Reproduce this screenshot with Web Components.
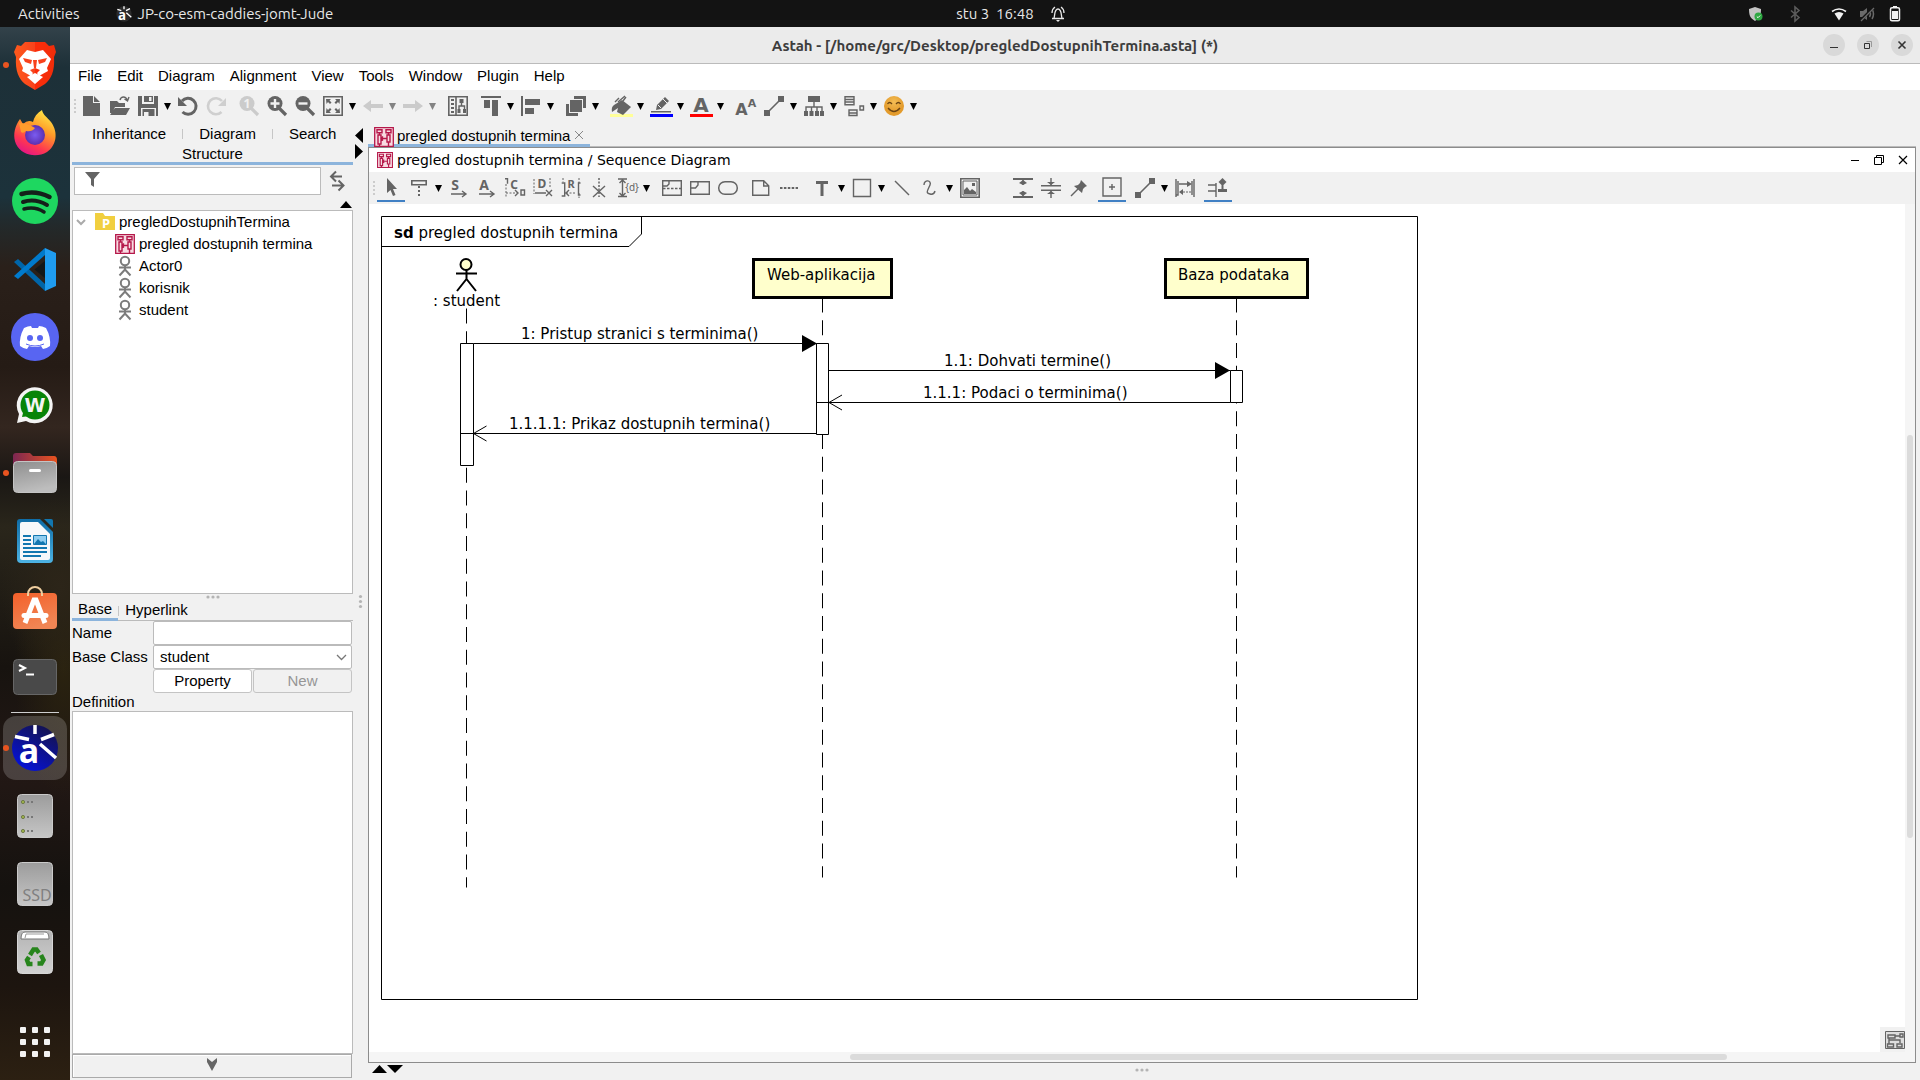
<!DOCTYPE html>
<html lang="hr">
<head>
<meta charset="utf-8">
<title>Astah - pregledDostupnihTermina.asta</title>
<style>
  html, body { height: 100%; margin: 0; }
  body {
    display: flex; flex-direction: column; overflow: hidden;
    font: 15px/20px "Liberation Sans", sans-serif; color: #000; background: #f1f1f1;
  }
  .desk { flex: 1; display: flex; min-height: 0; }
</style>
</head>
<body>
<top-bar></top-bar>
<div class="desk">
  <app-dock></app-dock>
  <app-window heading="Astah - [/home/grc/Desktop/pregledDostupnihTermina.asta] (*)">
    <menu-bar slot="menu" items="File,Edit,Diagram,Alignment,View,Tools,Window,Plugin,Help"></menu-bar>
    <tool-bar slot="tools" size="main"
      items="new open save+ undo redo - zoom1 zoomin zoomout fit+ back~ forward~ - struct - aligntop+ alignleft+ - stack+ - bucket+ pen+ fontcolor+ - fontsize link+ tree+ boxes+ smile+"></tool-bar>
    <side-panel slot="side"></side-panel>
    <split-handle slot="split"></split-handle>
    <editor-pane slot="editor" name="pregled dostupnih termina" kind="Sequence Diagram">
      <tool-bar slot="tools" size="sub"
        items="select! lifeline+ smsg amsg create destroy reply stop duration+ - combined frame state - note dots - text+ rect+ line curve+ image = vmax vmin pin - plus! - link+ fragment - snap!"></tool-bar>
      <sequence-diagram></sequence-diagram>
    </editor-pane>
  </app-window>
</div>

<script>
const G = '#646464';
const seq = `<path fill="#f8dbe2" stroke="#b5184a" stroke-width="1.300" d="M.7.7h18.600v18.600H.700z"/><g fill="none" stroke="#b5184a" stroke-width="1.400"><path d="M3 2.800h5v3H3zM12 2.800h5v3h-5zM4 8h3v9H4zM13 8h3v7h-3zM5.500 6v2M14.500 6v2M5.500 17v2.500M14.500 15v4.500M7 11.500h6M9 9.500l-2 2 2 2"/></g>`;
const person = `<g fill="none" stroke="#7c7c7c" stroke-width="2"><circle cx="10" cy="5" r="4.200"/><path d="M4 11.500h12M10 9v5M4.500 19.500L10 13.500l5.500 6"/></g>`;
const chain = `<path fill="${G}" d="M0 14h6v6H0zM14 0h6v6h-6z"/><path stroke="${G}" stroke-width="1.600" d="M4 16L16 4"/>`;
const lens = (c, inner) => `<circle cx="8" cy="7.500" r="7.500" fill="${c}"/><path d="M12 12l7 7" stroke="${c}" stroke-width="3.200"/>${inner}`;
const letter = (t, x, y, s, c = G, f = 'Noto Sans') => `<text x="${x}" y="${y}" font-family="${f}" font-weight="bold" font-size="${s}" fill="${c}" text-anchor="middle">${t}</text>`;
const o = d => `<path fill="none" stroke="${G}" stroke-width="1.400" d="${d}"/>`;
const f = d => `<path fill="${G}" d="${d}"/>`;

const ICONS = {
  new: f('M1 0h10v7h7v13H1zM12 0l6 6h-6z'),
  open: f('M0 5h7l2 2h6v4H5l-3 6H0zM5 12h15l-4 7H0z') + o('M10 4c1-4 6-4 7 0M14.500 3l3 2 1.500-4'),
  save: f('M0 0h4v8h12V0h4v20h-2v-8H3v8H0zM6 0h9v6H6zM4.500 13h12v7h-6v-4H6v4H4.500z') + `<path fill="#f1f1f1" d="M11 1h2.500v4H11z"/>`,
  undo: `<path d="M4 5A8 8 0 1 1 4.500 16" fill="none" stroke="${G}" stroke-width="3"/>` + f('M0 1v9h9z'),
  redo: `<path d="M16 5A8 8 0 1 0 15.500 16" fill="none" stroke="#cfcfcf" stroke-width="2.600"/><path fill="#cfcfcf" d="M20 2v8h-8z"/>`,
  zoom1: lens('#cbcbcb', letter('1', 8, 12, 12, '#f1f1f1')),
  zoomin: lens(G, '<path stroke="#f1f1f1" stroke-width="2.400" d="M8 3v9M3.500 7.500h9"/>'),
  zoomout: lens(G, '<path stroke="#f1f1f1" stroke-width="2.400" d="M3.500 7.500h9"/>'),
  fit: `<path fill="none" stroke="${G}" stroke-width="1.600" d="M.8.8h18.400v18.400H.800z"/>` + f('M3 3h5L6.500 4.500 8.500 6.500 7 8 5 6 3.500 8zM17 3h-5l1.500 1.500-2 2L13 8l2-2 1.500 2zM3 17h5l-1.500-1.500 2-2L7 12l-2 2-1.500-2zM17 17h-5l1.500-1.500-2-2L13 12l2 2 1.500-2z'),
  back: '<path fill="#cbcbcb" d="M0 10l8-6v4h12v4H8v4z"/>',
  forward: '<path fill="#cbcbcb" d="M20 10l-8-6v4H0v4h12v4z"/>',
  struct: `<path fill="none" stroke="${G}" stroke-width="1.600" d="M.8.8h18.400v18.400H.8zM8 1v18"/>` + f('M3 3h3v2H3zM3 7h3v2H3zM3 11h3v2H3zM3 15h3v2H3zM11.500 3h4v4h-4zM9.500 13h3v4h-3zM15 13h3v4h-3z') + o('M13.500 7v3M11 13v-3h5.500v3'),
  aligntop: f('M0 0h20v2H0zM3 4h6v8H3zM11 4h6v16h-6z'),
  alignleft: f('M0 0h2v20H0zM4 3h15v6H4zM4 12h9v6H4z'),
  stack: f('M8 0h12v12h-3V3H8zM4 4h12v12H4zM0 8h3v9h9v3H0z'),
  bucket: f('M3 9l8-5 9 7-8 8-6-3 1-4-6 4q-1-5 2-7z') + o('M4 6l4-4M7 6l7-6M12 5l3-4'),
  pen: f('M5 14l1-5 8-8 4 4-8 8zM0 15h20v1.400H0z') + '<path stroke="#f1f1f1" d="M12 3l4 4M7 9l3 3"/>',
  fontcolor: letter('A', 10, 16, 20, G, 'DejaVu Sans'),
  fontsize: letter('A', 5.500, 19, 16, G, 'DejaVu Sans') + letter('A', 16, 11, 11, G, 'DejaVu Sans'),
  link: chain,
  tree: f('M4 0h12v6H4zM0 15h4v5H0zM5.500 15h4v5h-4zM11 15h4v5h-4zM16 15h4v5h-4z') + o('M10 6v5M2 15v-4h16v4M7.500 15v-4M13 15v-4'),
  boxes: o('M1 .7h9v8H1zM1 3.500h9M1 6h9M5 14h8v5.500H5zM5 17h8M16 10h3.500v4H16z'),
  smile: `<radialGradient id="g" cy=".3"><stop stop-color="#f4bd55"/><stop offset="1" stop-color="#e39b2c"/></radialGradient><circle cx="10" cy="10" r="10" fill="url(#g)"/><path fill="none" stroke="#6b4413" stroke-width="1.300" d="M3.500 8q2-3 4.500 0M12 8q2.500-3 4.500 0M4 12q6 7 12 0"/>`,
  select: f('M6 1v15l3.500-3 2.500 6 2.500-1-2.500-6h4z'),
  lifeline: `<path fill="none" stroke="${G}" stroke-width="1.600" d="M2.800 2.800h14.400v4H2.800z"/><path stroke="${G}" stroke-width="2" stroke-dasharray="2 2" d="M10 8v11"/>`,
  smsg: letter('S', 6, 12, 14) + o('M2 16h15M13 13l4 3-4 3'),
  amsg: letter('A', 7, 12, 14) + o('M2 16h15M13 13l4 3-4 3'),
  create: letter('C', 9, 11, 12) + o('M0 .7h2.500v5') + `<path fill="none" stroke="${G}" stroke-dasharray="2 1.500" d="M1 6v13M1 15h12"/>` + o('M16 12h3.500v5H16zM10 12l3 3-3 3'),
  destroy: letter('D', 9, 10, 12) + `<path fill="none" stroke="${G}" stroke-dasharray="2 1.500" d="M1 1v15M17 0v10"/>` + o('M2 15h11M13 12l6 6M19 12l-6 6'),
  reply: letter('R', 10, 10, 11) + `<path fill="none" stroke="${G}" stroke-dasharray="2 1.500" d="M2 0v4M18 0v5M5 15h10M18 15v5"/>` + o('M.7 5h3v13h-3M19.500 5h-2v12h2M8 12l-3 3 3 3'),
  stop: o('M4 8l12 11M16 8L4 19') + `<path stroke="${G}" stroke-width="1.500" stroke-dasharray="2 1.500" d="M10 0v19"/>`,
  duration: o('M1 1h9M1 18.500h9M5.500 2v16M2.500 5l3-3 3 3M2.500 15l3 3 3-3') + `<text x="15" y="13" font-family="Noto Sans" font-size="10" fill="${G}" text-anchor="middle">{d}</text>`,
  combined: o('M.7 2.700h18.600v14.600H.700zM7 3v3L5 8H1') + `<path stroke="${G}" stroke-width="1.500" stroke-dasharray="2.500 1.500" d="M1 10.500h18"/>`,
  frame: o('M.7 3.700h18.600v12.600H.700zM8 4v3l-2.500 3H1'),
  state: `<rect x=".7" y="3.700" width="18.600" height="12.600" rx="6.300" fill="none" stroke="${G}" stroke-width="1.500"/>`,
  note: o('M1.700 2.700h11l5 5v9.600h-16zM12.700 3v5h5'),
  dots: `<path stroke="${G}" stroke-width="2" stroke-dasharray="2.500 1.400" d="M1 10h18"/>`,
  text: f('M4 3h12v3h-4.500v12h-3V6H4z'),
  rect: o('M1.500 1.500h17v17h-17z'),
  line: o('M3 3l14 14'),
  curve: o('M4 7c0-6 8-5 6 0s-5 8 0 9q4 1 5-3'),
  image: `<path fill="none" stroke="${G}" stroke-width="1.600" d="M.8.8h18.400v18.400H.8z"/><path fill="none" stroke="${G}" d="M3 3h14v14H3z"/>` + f('M4 16v-4l3-3 3 4 2-2 4 3v2zM12 5h3v3h-3z'),
  vmax: f('M0 0h20v2H0zM0 18h20v2H0z') + o('M10 2v5M10 13v5') + f('M6 5l4-3 4 3-4 2zM6 15l4-2 4 2-4 3z'),
  vmin: f('M0 7h20v1.600H0zM0 11.400h20V13H0z') + o('M10 0v7M10 13v7') + f('M6 4h8l-4 3zM6 16h8l-4-3z'),
  pin: f('M12 2l6 6-2 1-2 2-1 4-8-7 4-1 2-2z') + o('M9 11l-7 7'),
  plus: o('M1 1h18v18H1zM10 7v6M7 10h6'),
  fragment: o('M1 1v18M3 3v14H.700M19 1v18M17 3v14M4 6h11') + f('M12 3l5 3-5 3zM4 14l4-3v6z') + `<path stroke="${G}" stroke-dasharray="2 1" d="M8 14h8"/>`,
  snap: o('M0 8h8M0 14h8M8 6v14') + f('M10 12h9v3h-9zM14.500 1l4 4-4 4-4-4zM13.500 8h2v4h-2z'),
  map: `<path fill="#dedede" stroke="${G}" d="M.5 1.500h19v17H.5z"/>` + o('M3 5h7v3H3zM10 6h5M4 8v6M4 10h11v3M2.500 14h6v3h-6zM12 14h5v3h-5zM15 4h3v3h-3z'),
  seq, person,
  folder: '<path fill="#f1cf3f" d="M0 1h8l2 3h10v14H0z"/>' + letter('P', 11, 16, 13, '#fff'),
  filter: f('M3 2h15l-6 7v8l-3-2V9z'),
  swap: `<path fill="none" stroke="${G}" stroke-width="2" d="M15 5.500H4M9 .500l-5 5 5 5M5 14.500h11M11.500 9.500l5 5-5 5"/>`,
  shield: '<path fill="#c4c4c4" d="M2 3l6-2 6 2c0 6-1 9-6 12C3 12 2 9 2 3z"/><circle cx="11.500" cy="10.500" r="4" fill="#2fa843"/><path fill="none" stroke="#fff" d="M9.800 10.500l1.200 1.200 2.200-2.200"/>',
  bluetooth: '<path fill="none" stroke="#5c5c5c" stroke-width="1.600" d="M4 4.500l8 7-4 3.500V1l4 3.500-8 7"/>',
  wifi: '<path fill="#f2f2f2" d="M3.500 7.500q4.500-3 9 0L8 14.500z"/><path fill="none" stroke="#f2f2f2" stroke-width="1.600" d="M1 5.500q7-5 14 0"/>',
  mute: '<path fill="#6a6a6a" d="M1 5h3l4-3v12l-4-3H1z"/><path fill="none" stroke="#6a6a6a" stroke-width="1.500" d="M10.500 5q2 3 0 6M13 3q3 5 0 10"/><path stroke="#131313" stroke-width="2.500" d="M2 14L14 2"/><path stroke="#6a6a6a" stroke-width="1.300" d="M2 15L15 2"/>',
  battery: '<path fill="#f2f2f2" d="M5 5h6v8H5zM6 0h4v2H6z"/><rect x="3.500" y="1.700" width="9" height="13" rx="1.500" fill="none" stroke="#f2f2f2" stroke-width="1.500"/>',
  bell: '<path fill="none" stroke="#e8e8e8" stroke-width="1.300" d="M2 12.500h12M4 12c1-2 0-9 4-9s3 7 4 9M2 7q0-4 3-6M14 7q0-4-3-6"/><path fill="#e8e8e8" d="M6 14h4l-2 2z"/>',
};

const DOCK = {
  brave: `<linearGradient id="b"><stop stop-color="#ff5a1c"/><stop offset=".5" stop-color="#f8421c"/><stop offset=".51" stop-color="#fb2d0a"/><stop offset="1" stop-color="#f02d0a"/></linearGradient><path fill="url(#b)" d="M14 1h20l4 4 5-1 2 7-2 5c1 14-3 22-9 27l-10 6-10-6C8 38 4 30 5 16l-2-5 3-7 4 1z"/><path fill="#fff" d="M16 9l8 2 8-2 8 9-4 9 1 3-9 5-2-3 3-3-5-2-5 2 3 3-2 3-9-5 1-3-4-9zM24 32l8 4-8 7-8-7z"/><path fill="#f8421c" d="M12 17l9 2-1 4-6-2zM36 17l-9 2 1 4 6-2zM22 19h4l-1 8h-2z"/>`,
  firefox: `<linearGradient id="f" x1=".8" y1="0" x2=".3" y2="1"><stop stop-color="#fff04a"/><stop offset=".4" stop-color="#ff9a28"/><stop offset=".75" stop-color="#ff3750"/><stop offset="1" stop-color="#e31587"/></linearGradient><radialGradient id="f2"><stop stop-color="#7a5cf0"/><stop offset="1" stop-color="#5b2fb0"/></radialGradient><path fill="url(#f)" d="M31 1c1 5 5 7 9 12 8 11 5 24-4 30-10 6-25 4-31-8C2 28 3 20 7 13l2-3 3 5q5-5 10-2c1-5 4-9 9-12z"/><circle cx="24" cy="26" r="10" fill="url(#f2)"/><path fill="#ff9c2c" d="M8 14q8 0 16 5-3 4-9 3-3 3-5 1z"/>`,
  spotify: `<circle cx="24" cy="24" r="23" fill="#1ed760"/><g fill="none" stroke="#14201a" stroke-linecap="round"><path stroke-width="4.500" d="M10.500 17q14-4 28 3"/><path stroke-width="4" d="M12 25q12-4 24 3"/><path stroke-width="3.500" d="M13 32q11-3 20 3"/></g>`,
  code: `<path fill="#0065a9" d="M3 17l4-3 27 25v7z"/><path fill="#007acc" d="M3 31l4 3 27-24V3z"/><path fill="#1f9cf0" d="M34 3l11 5v33l-11 5z"/><path fill="#131719" d="M34 16v17L23.500 24.500z"/>`,
  discord: `<circle cx="24" cy="24" r="24" fill="#5865f2"/><path fill="#fff" d="M13 15q4-2 7-2l1 2h6l1-2q3 0 7 2 5 9 4 18-4 3-7 3l-2-3q-6 2-12 0l-2 3q-3 0-7-3-1-9 4-18z"/><circle cx="19" cy="25" r="3" fill="#5865f2"/><circle cx="29" cy="25" r="3" fill="#5865f2"/><path fill="none" stroke="#5865f2" d="M15 31q9 4 18 0"/>`,
  whats: `<path fill="#f4f4f4" d="M6 42l2-9a18 18 0 1 1 7 7z"/><circle cx="24" cy="24" r="14.500" fill="#078407"/><path fill="#078407" d="M11 36l2-8 6 7z"/>` + letter('W', 24, 31, 19, '#f4f4f4', 'DejaVu Sans'),
  files: `<linearGradient id="c"><stop stop-color="#7c2752"/><stop offset="1" stop-color="#e9531f"/></linearGradient><linearGradient id="d" x2=".3" y2="1"><stop stop-color="#8e8e8e"/><stop offset="1" stop-color="#bdbdbd"/></linearGradient><path fill="url(#c)" d="M2 7q0-3 3-3h14l3 3h21q3 0 3 4v10H2z"/><rect x="2.500" y="12.500" width="43" height="31" rx="4" fill="url(#d)" stroke="#c4c4c4"/><rect x="18" y="20" width="12" height="3" rx="1.500" fill="#fff"/>`,
  writer: `<linearGradient id="w" y2="1" x2="0"><stop stop-color="#0e6ca6"/><stop offset="1" stop-color="#4db3e4"/></linearGradient><path fill="url(#w)" d="M9 2h20l13 13v27q0 4-4 4H10q-4 0-4-4V5q0-3 3-3z"/><path fill="#f6f8fa" d="M11 5h16l12 12v24q0 2-2 2H11q-2 0-2-2V7q0-2 2-2z"/><path fill="#1277b0" d="M33 2h7q2 0 2 2v7z"/><path stroke="#1277b0" stroke-width="2" d="M12 19h8M12 23h8M12 27h8M12 31h24M12 35h24M12 39h18"/><path fill="#8fcdf0" stroke="#1277b0" d="M22.500 18.500h13v9h-13z"/><path fill="#1277b0" d="M23 27l4-5 3 3 2-1 3 3z"/>`,
  store: `<linearGradient id="s" x2=".4" y2="1"><stop stop-color="#f4602a"/><stop offset="1" stop-color="#f08554"/></linearGradient><rect x="2" y="8" width="44" height="36" rx="4" fill="url(#s)"/><path fill="none" stroke="#f0cfa0" stroke-width="2" d="M17 11V9a7 7 0 0 1 14 0v2"/><path fill="none" stroke="#fff" stroke-width="5" d="M14 38l9-23h2l9 23"/><path stroke="#fff" stroke-width="5" stroke-linecap="round" d="M13 30.500h22"/>`,
  terminal: `<rect x="2.500" y="6.500" width="43" height="35" rx="4" fill="#494949" stroke="#666"/><path fill="none" stroke="#fff" stroke-width="2" d="M8 12l6 3-6 3M15 21.500h8"/>`,
  astah: `<linearGradient id="a" x1=".2" y1="1" x2=".8" y2="0"><stop stop-color="#0512dd"/><stop offset="1" stop-color="#15134a"/></linearGradient><circle cx="24" cy="24" r="23" fill="url(#a)"/><g fill="none" stroke="#fff" stroke-width="3.500"><path d="M24 1v9M4 12.500l14 3M43 10.500l-13 5M29 20l16 14"/></g>` + letter('a', 18, 39, 34, '#fff'),
  disks: `<linearGradient id="k" y2="1" x2="0"><stop stop-color="#9c9c9c"/><stop offset="1" stop-color="#c6c6c6"/></linearGradient><rect x="6.500" y="2.500" width="35" height="43" rx="4" fill="url(#k)" stroke="#cacaca"/><g fill="#9fb548" stroke="#6f7a4a"><circle cx="12" cy="10" r="1.600"/><circle cx="12" cy="25" r="1.600"/><circle cx="12" cy="39" r="1.600"/></g><path stroke="#777" stroke-width="2" stroke-dasharray="2 2" d="M16 10h6M16 25h6M16 39h6"/>`,
  ssd: `<linearGradient id="k" y2="1" x2="0"><stop stop-color="#9c9c9c"/><stop offset="1" stop-color="#c6c6c6"/></linearGradient><rect x="6.500" y="2.500" width="35" height="43" rx="4" fill="url(#k)" stroke="#cacaca"/><text x="26" y="41" font-family="Noto Sans" font-size="16" fill="#808080" text-anchor="middle">SSD</text>`,
  trash: `<linearGradient id="t" y2="1" x2="0"><stop stop-color="#b4b4b4"/><stop offset="1" stop-color="#d2d2d2"/></linearGradient><rect x="6.500" y="2.500" width="35" height="43" rx="4" fill="url(#t)" stroke="#d6d6d6"/><path fill="#fff" stroke="#777" d="M10 11q0-7 4-7h20q4 0 4 7z"/><path fill="none" stroke="#999" d="M14 10l1-4h18"/><g fill="none" stroke="#27851c" stroke-width="4.500"><path d="M19 27l3.500-5.500h3L28 25"/><path d="M30 27l2.500 5-2 3.500h-4"/><path d="M21.500 36h-4l-1.500-4 2-3"/></g>`,
  grid: `<g fill="#f2f2f2">${[9, 21, 33].map(y => [9, 21, 33].map(x => `<rect x="${x}" y="${y}" width="6" height="6" rx="1"/>`).join('')).join('')}</g>`,
};

/* Base class: renders the markup that view() returns into an open shadow root. */
class Base extends HTMLElement {
  connectedCallback() {
    if (this.shadowRoot) return;
    const t = document.createElement('template');
    t.innerHTML = `<style>:host,*{box-sizing:border-box} svg{overflow:visible} button{font:inherit;color:inherit;margin:0;padding:0;border:0;background:none}</style>` + this.view();
    this.attachShadow({ mode: 'open' }).append(t.content.cloneNode(true));
  }
}
const define = (name, view) => customElements.define(name, class extends Base { view() { return view(this); } });

define('ui-icon', e => {
  const s = e.getAttribute('size') || 20;
  const n = e.getAttribute('name');
  const box = { shield: 16, bluetooth: 16, wifi: 16, mute: 16, battery: 16, bell: 16 }[n] || 20;
  return `<style>:host{display:block;flex:none;width:${s}px;height:${s}px}svg{display:block}</style>
  <svg width="${s}" height="${s}" viewBox="0 0 ${box} ${box}" aria-hidden="true">${ICONS[n]}</svg>`;
});

define('top-bar', () => `<style>
  :host{display:grid;grid-template-columns:1fr auto 1fr;align-items:center;flex:none;height:27px;background:#131313;color:#e8e8e8;font:15px/20px Ubuntu,"Noto Sans",sans-serif}
  div{display:flex;align-items:center}
  .l{padding-left:18px;gap:36px} .app{gap:6px}
  .c{padding-left:102px;gap:16px} .c span{white-space:pre}
  .r{justify-content:flex-end;gap:12px;padding-right:17px}
  .bt{margin:0 16px 0 12px}
  </style>
  <div class="l"><button>Activities</button><div class="app">
    <svg width="16" height="16" viewBox="0 0 48 48" aria-hidden="true"><circle cx="24" cy="24" r="23" fill="#2b2b2b"/><g stroke="#fff" stroke-width="4"><path d="M24 1v9M4 10l12 4M42 8l-12 6M31 20l15 14"/></g>${letter('a', 18, 42, 40, '#fff')}</svg>
    <span>JP-co-esm-caddies-jomt-Jude</span></div></div>
  <div class="c"><span>stu 3  16:48</span><ui-icon name="bell" size="16"></ui-icon></div>
  <div class="r"><ui-icon name="shield" size="16"></ui-icon><ui-icon class="bt" name="bluetooth" size="16"></ui-icon><ui-icon name="wifi" size="16"></ui-icon><ui-icon name="mute" size="16"></ui-icon><ui-icon name="battery" size="16"></ui-icon></div>`);

define('dock-item', e => `<style>
  :host{display:grid;flex:none;height:68px;place-items:center}
  button,.dot{grid-area:1/1}
  button{display:grid;place-items:center;width:64px;height:64px;border-radius:13px;${e.hasAttribute('active') ? 'background:#ffffff2e' : ''}}
  svg{display:block}
  .dot{justify-self:start;margin-left:3px;width:6px;height:6px;border-radius:3px;background:#e95420}
  </style><button aria-label="${e.getAttribute('icon')}"><svg width="48" height="48" viewBox="0 0 48 48" aria-hidden="true">${DOCK[e.getAttribute('icon')]}</svg></button>
  ${e.hasAttribute('running') ? '<span class="dot"></span>' : ''}`);

define('app-dock', () => {
  const item = s => {
    if (s === '|') return '<hr>';
    const [, n, m] = s.match(/(\w+)(.*)/);
    return `<dock-item icon="${n}"${m.includes('.') ? ' running' : ''}${m.includes('*') ? ' active' : ''}></dock-item>`;
  };
  return `<style>
  :host{display:flex;flex-direction:column;flex:none;width:70px;padding:4px 0;
    background:radial-gradient(60px 90px at 60px 560px,#2c2519 0,transparent),radial-gradient(50px 130px at 64px 640px,#2b2310 0,transparent),
    linear-gradient(#33424a 0,#1d3038 40px,#1c323b 170px,#23292a 200px,#2a201a 240px,#251b15 340px,#33261f 400px,#1a1714 450px,#2a261b 500px,#17130f 640px,#231815 740px,#15120f 860px,#1d150f 960px,#2c2012)}
  hr{flex:none;width:48px;height:1px;margin:1px auto;border:0;background:#cfcfcf}
  dock-item:last-child{margin-top:auto}
  </style>` + 'brave. firefox spotify code discord whats files. writer store terminal | astah.* disks ssd trash grid'.split(' ').map(item).join('');
});

define('app-window', e => `<style>
  :host{flex:1;display:flex;flex-direction:column;min-width:0;background:#f1f1f1}
  header{display:grid;grid-template-columns:1fr auto 1fr;align-items:center;flex:none;height:37px;background:#ebebeb;border-bottom:1px solid #bbb}
  h1{grid-column:2;margin:0;padding-top:1px;font:bold 15px/20px Ubuntu,"Noto Sans",sans-serif;color:#3d3d3d}
  .ctl{display:flex;justify-content:flex-end;gap:12px;padding-right:7px}
  .ctl button{width:22px;height:22px;border-radius:11px;background:#d9d9d9}
  .ctl svg{display:block}
  main{flex:1;display:flex;min-height:0}
  </style>
  <header><h1>${e.getAttribute('heading')}</h1><div class="ctl">
    <button aria-label="Minimize"><svg width="22" height="22"><path stroke="#333" d="M7 13.500h8"/></svg></button>
    <button aria-label="Restore"><svg width="22" height="22" fill="none"><path stroke="#999" d="M9.500 7.500h5V13"/><path stroke="#333" d="M7.500 9.500h5v5h-5z"/></svg></button>
    <button aria-label="Close"><svg width="22" height="22"><path stroke="#333" stroke-width="1.600" d="M7.500 7.500l7 7M14.500 7.500l-7 7"/></svg></button></div></header>
  <slot name="menu"></slot><slot name="tools"></slot>
  <main><slot name="side"></slot><slot name="split"></slot><slot name="editor"></slot></main>`);

define('menu-bar', e => `<style>
  :host{display:flex;align-items:center;gap:15px;flex:none;height:26px;padding:0 8px 2px;background:#fff}
  </style>` + e.getAttribute('items').split(',').map(t => `<button>${t}</button>`).join(''));

define('tool-bar', e => {
  const sub = e.getAttribute('size') === 'sub';
  const under = { bucket: '#ffff99', pen: '#0000ff', fontcolor: '#ff0000' };
  const one = s => {
    if (s === '-') return '<i></i>';
    if (s === '=') return '<i class="w"></i>';
    const [, n, m] = s.match(/(\w+)(.?)/);
    const cls = m === '!' ? 'on' : under[n] ? 'ink' : '';
    const st = under[n] ? ` style="--ink:${under[n]}"` : '';
    return `<button class="${cls}"${st} aria-label="${n}"><ui-icon name="${n}"></ui-icon></button>` +
      (m === '+' || m === '~' ? `<button class="a ${m === '~' ? 'off' : ''}" aria-label="${n} menu"><svg width="7" height="7"><path d="M0 0h7L3.500 7z"/></svg></button>` : '');
  };
  return `<style>
  :host{display:flex;align-items:stretch;flex:none;height:${sub ? 32 : 34}px;padding-left:4px;background:#f1f1f1}
  .grip{flex:none;width:4px;margin:${sub ? '9px 0 9px' : '9px 0 11px'};background:repeating-linear-gradient(#ccc 0 2px,transparent 2px 4px) 0 0/2px 100% no-repeat}
  i{flex:none;width:5px} i.w{width:25px}
  button{display:flex;align-items:center;justify-content:center;flex:none;width:28px;height:32px}
  button.on{border-bottom:2px solid #4080c4;padding-top:2px;height:30px}
  button.ink{background:linear-gradient(var(--ink),var(--ink)) 50% 24px/23px 3px no-repeat}
  button.a{width:12px;justify-content:flex-start;padding-left:2px} button.off{opacity:.45}
  </style><span class="grip"></span>` + e.getAttribute('items').trim().split(/\s+/).map(one).join('');
});

define('split-handle', () => `<style>
  :host{display:flex;flex-direction:column;align-items:center;flex:none;width:15px;padding:4px 0 36px}
  svg{display:block;flex:none}
  .t{margin-right:2px}
  .d{margin:auto 0}
  </style><svg class="t" width="9" height="32"><path d="M8 0v15L0 7.500zM0 16v15l8-7.500z"/></svg>
  <svg class="d" width="5" height="16" fill="#b4b4b4"><circle cx="2.500" cy="2.500" r="1.600"/><circle cx="2.500" cy="7.500" r="1.600"/><circle cx="2.500" cy="12.500" r="1.600"/></svg>`);

define('tree-row', e => `<style>
  :host{display:flex;align-items:center;height:22px;gap:4px;padding-left:${e.getAttribute('level') === '0' ? 2 : 42}px}
  .c{margin-right:4px}
  </style>${e.getAttribute('level') === '0' ? '<svg class="c" width="12" height="12"><path fill="none" stroke="#aaa" stroke-width="2" d="M2 4l4 4 4-4"/></svg>' : ''}
  <ui-icon name="${e.getAttribute('icon')}"></ui-icon><slot></slot>`);

define('side-panel', () => `<style>
  :host{display:flex;flex-direction:column;flex:none;width:283px;padding:0 0 2px 2px}
  .tabs{display:flex;flex-wrap:wrap;flex:none;gap:0 16px;padding-left:20px}
  .tabs .s{width:1px;height:10px;margin:5px 0;background:#c6c6c6}
  .tabs button{height:20px}
  .cur{flex:none;height:21px;border-bottom:3px solid #8cb4dc}
  .find{display:flex;align-items:center;flex:none;height:32px;margin-bottom:4px;padding-left:2px;gap:6px}
  .box{display:flex;align-items:center;width:247px;height:28px;border:1px solid #bbb;background:#fff;padding-left:7px}
  .box ui-icon{margin-bottom:2px}
  .box input{flex:1;min-width:0;border:0;outline:0;background:none;font:inherit}
  .up{align-self:flex-end;flex:none;margin-right:1px;display:block}
  .tree{flex:none;height:384px;margin-top:2px;border:1px solid #bbb;background:#fff}
  .grab{display:block;flex:none;margin:1px auto}
  .tabs2{display:flex;align-items:stretch;flex:none;height:21px;border-bottom:1px solid #bbb}
  .tabs2 button{padding:0 6px 1px;line-height:20px} .tabs2 .on{border-bottom:3px solid #8cb4dc;margin-bottom:-1px;padding-bottom:0;line-height:18px}
  .tabs2 .s{width:1px;height:10px;margin-top:6px;background:#c6c6c6}
  .form{display:grid;grid-template-columns:81px 1fr;grid-auto-rows:24px;align-items:center;flex:none;padding-right:1px}
  .form input,.form select{width:100%;height:24px;border:1px solid #bbb;border-radius:2px;background:#fff;font:inherit;color:#000}
  .sel{display:grid}.sel>*{grid-area:1/1}
  .sel select{appearance:none;padding-left:6px}
  .sel svg{justify-self:end;align-self:center;margin-right:5px;pointer-events:none}
  .bt{grid-column:2;display:flex;gap:1px}
  .bt button{flex:1;height:24px;border:1px solid #c4c4c4;border-radius:3px;background:#fff}
  .bt button:disabled{background:#f1f1f1;color:#969696}
  .dl{flex:none;height:18px;line-height:18px}
  textarea{flex:1;min-height:0;width:100%;display:block;border:1px solid #bbb;background:#fff;resize:none}
  .more{flex:none;height:24px;border:1px solid #aaa;box-shadow:inset 1px 1px #fff;margin-right:1px}
  </style>
  <div class="tabs"><button>Inheritance</button><span class="s"></span><button>Diagram</button><span class="s"></span><button>Search</button></div>
  <button class="cur">Structure</button>
  <div class="find"><label class="box"><ui-icon name="filter" size="20"></ui-icon><input aria-label="Filter"></label>
    <button aria-label="Switch"><ui-icon name="swap"></ui-icon></button></div>
  <svg class="up" width="12" height="7"><path d="M0 7h12L6 0z"/></svg>
  <div class="tree">
    <tree-row level="0" icon="folder">pregledDostupnihTermina</tree-row>
    <tree-row icon="seq">pregled dostupnih termina</tree-row>
    <tree-row icon="person">Actor0</tree-row><tree-row icon="person">korisnik</tree-row><tree-row icon="person">student</tree-row></div>
  <svg class="grab" width="14" height="4" fill="#b4b4b4"><circle cx="2" cy="2" r="1.600"/><circle cx="7" cy="2" r="1.600"/><circle cx="12" cy="2" r="1.600"/></svg>
  <div class="tabs2"><button class="on">Base</button><span class="s"></span><button>Hyperlink</button></div>
  <div class="form"><label for="n">Name</label><input id="n">
    <label for="b">Base Class</label><div class="sel"><select id="b"><option>student</option></select><svg width="11" height="7"><path fill="none" stroke="#777" stroke-width="1.300" d="M1 1l4.500 4.500L10 1"/></svg></div>
    <div class="bt"><button>Property</button><button disabled>New</button></div></div>
  <label class="dl" for="d">Definition</label><textarea id="d"></textarea>
  <button class="more" aria-label="More"><svg width="10" height="13"><path fill="#666" d="M0 0l5 4 5-4v4L5 13 0 4z"/></svg></button>`);

define('editor-pane', e => `<style>
  :host{flex:1;display:flex;flex-direction:column;min-width:0;padding-right:4px}
  .tab{display:flex;flex:none;height:23px;border-bottom:1px solid #bbb}
  .tab div{display:flex;align-items:center;gap:3px;padding:2px 5px 0 6px;height:23px;border-bottom:3px solid #8cb4dc}
  .tab ui-icon{margin-bottom:-3px} .tab span{margin-bottom:-1px}
  .frame{flex:1;display:flex;flex-direction:column;min-height:0;border:1px solid #8c8c8c;background:#fff}
  .head{display:flex;align-items:center;flex:none;height:24px;padding:0 7px 0 8px;gap:4px;font:14px/20px "DejaVu Sans",sans-serif}
  .head span{flex:1}.head svg{display:block}
  .ctl{display:flex;gap:14px;align-items:center}
  .body{flex:1;display:grid;grid-template:1fr 10px/1fr 10px;min-height:0;position:relative;background:#f5f5f5}
  .canvas{background:#fff;overflow:hidden}
  .v,.h{display:grid}
  .v{grid-template-rows:231fr 403fr 214fr;padding:0 2px} .h{grid-template-columns:481fr 877fr 188fr;grid-column:1/3;padding:2px 0}
  .v b{grid-row:2}.h b{grid-column:2} b{border-radius:3px;background:#dbdbdb}
  .map{position:absolute;right:10px;bottom:10px;width:25px;height:25px;padding-left:5px;background:#f1f1f1}
  footer{display:flex;align-items:flex-start;flex:none;height:17px;padding:2px 35px 0 4px}
  footer svg{display:block}.g{margin:3px auto 0}
  </style>
  <div class="tab"><div><ui-icon name="seq"></ui-icon><span>${e.getAttribute('name')}</span><button aria-label="Close tab"><svg width="12" height="10"><path stroke="#888" d="M2 1l8 8M10 1L2 9"/></svg></button></div></div>
  <div class="frame"><div class="head"><ui-icon name="seq" size="16"></ui-icon><span>${e.getAttribute('name')} / ${e.getAttribute('kind')}</span>
    <div class="ctl"><button aria-label="Minimize"><svg width="10" height="10"><path stroke="#000" d="M1 5.500h8"/></svg></button>
    <button aria-label="Restore"><svg width="10" height="10" fill="none" stroke="#000"><path d="M.5 2.500h7v7h-7zM2.500 2.500v-2h7v7h-2"/></svg></button>
    <button aria-label="Close"><svg width="10" height="10"><path stroke="#000" stroke-width="1.200" d="M1 1l8 8M9 1L1 9"/></svg></button></div></div>
    <slot name="tools"></slot>
    <div class="body"><div class="canvas"><slot></slot></div><div class="v"><b></b></div><div class="h"><b></b></div>
    <button class="map" aria-label="Map view"><ui-icon name="map"></ui-icon></button></div></div>
  <footer><svg width="31" height="8"><path d="M0 8h15L7.500 0zM15 0h16l-8 8z"/></svg>
    <svg class="g" width="14" height="4" fill="#b4b4b4"><circle cx="2" cy="2" r="1.600"/><circle cx="7" cy="2" r="1.600"/><circle cx="12" cy="2" r="1.600"/></svg></footer>`);

define('sequence-diagram', () => `<style>
  :host{display:block}
  svg{display:block;font:15px "DejaVu Sans",sans-serif}
  .l{fill:none;stroke:#000}
  .w{fill:#fff;stroke:#000}
  .b{fill:#ffffcc;stroke:#000;stroke-width:3}
  .d{stroke:#000;stroke-dasharray:15 7.750}
  .k{fill:none;stroke:#000;stroke-width:2}
  </style>
  <svg width="1060" height="812" viewBox="369 204 1060 812">
    <path class="l" d="M381.500 216.500h1036v783h-1036zM381.500 246.500h247.500l12.500-12.500v-17.500"/>
    <text x="394" y="238"><tspan font-weight="bold">sd</tspan> pregled dostupnih termina</text>
    <path class="d" d="M466.500 308.500v579M822.500 297.500v580M1236.500 297.500v580"/>
    <ellipse class="b" style="stroke-width:2" cx="466" cy="264.500" rx="5.500" ry="5.500"/>
    <path class="k" d="M456 273.500h21M466.500 270v9.500M457 291l9.500-12 9.500 12"/>
    <text x="433" y="306">: student</text>
    <path class="b" d="M753.500 259.500h138v38h-138zM1165.500 259.500h142v38h-142z"/>
    <text x="767" y="280">Web-aplikacija</text>
    <text x="1178" y="280">Baza podataka</text>
    <path class="w" d="M460.500 343.500h13v122h-13zM816.500 343.500h12v91h-12zM1230.500 370.500h12v32h-12z"/>
    <path class="l" d="M473.500 343.500h343M828.500 370.500h402M816.500 402.500h414M460.500 433.500h356M842 395l-13 7.500 13 7.500M486.500 426l-13 7.500 13 7.500"/>
    <path d="M802 335l15 8.500-15 8.500zM1215 362l15 8.500-15 8.500z"/>
    <text x="521" y="339">1: Pristup stranici s terminima()</text>
    <text x="944" y="366">1.1: Dohvati termine()</text>
    <text x="923" y="398">1.1.1: Podaci o terminima()</text>
    <text x="509" y="429">1.1.1.1: Prikaz dostupnih termina()</text>
  </svg>`);
</script>
</body>
</html>
